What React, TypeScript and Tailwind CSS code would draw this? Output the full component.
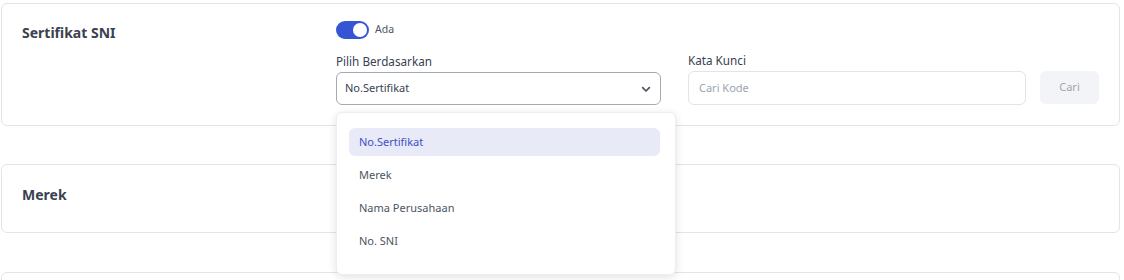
import React from "react";

export default function App() {
  const items = ["No.Sertifikat", "Merek", "Nama Perusahaan", "No. SNI"];
  return (
    <div className="w-[1124px] h-[280px] overflow-hidden bg-white pt-[3px] pl-[1px] font-['Noto_Sans','Open_Sans',sans-serif]">
      <div className="w-[1119px] h-[123px] border border-[#e2e4e8] rounded-[6px] flex pl-[20px] pt-[17px]">
        <div className="w-[314px] pt-[2px] text-[14px] leading-[20px] font-bold text-[#3a4150]">Sertifikat SNI</div>
        <div className="flex flex-col">
          <div className="flex items-center gap-[6px] h-[18px]">
            <div className="w-[33px] h-[18px] rounded-full bg-[#3556d4] flex items-center justify-end pr-[2px]">
              <div className="w-[14px] h-[14px] rounded-full bg-white" />
            </div>
            <span className="text-[10.5px] text-[#4b5563]">Ada</span>
          </div>
          <div className="flex items-end mt-[13px]">
            <div className="flex flex-col">
              <div className="text-[11.7px] leading-[16px] text-[#374151] mb-[3px]">Pilih Berdasarkan</div>
              <div className="relative w-[325px] h-[33px] border border-[#a5a9b3] rounded-[6px] flex items-center pl-[8px] pr-[6px] justify-between">
                <span className="text-[11px] text-[#374151]">No.Sertifikat</span>
                <svg width="16" height="16" viewBox="0 0 24 24" fill="none" stroke="#4b5563" strokeWidth="2.6" strokeLinecap="round" strokeLinejoin="round"><path d="M7 10l5 5 5-5" /></svg>
                <div className="absolute left-[-1px] top-[39px] w-[340px] h-[163px] bg-white rounded-[6px] border border-[#eceef1] shadow-[0_2px_8px_rgba(0,0,0,0.12)] pt-[15px] pl-[12px] pr-[15px] z-10 flex flex-col gap-[5px]">
                  {items.map((it, i) => (
                    <div key={it} className={i === 0 ? "h-[28px] rounded-[6px] flex items-center pl-[10px] text-[11px] bg-[#e8eaf7] text-[#3b50c9]" : "h-[28px] rounded-[6px] flex items-center pl-[10px] text-[11px] text-[#4b5563]"}>{it}</div>
                  ))}
                </div>
              </div>
            </div>
            <div className="flex flex-col ml-[27px]">
              <div className="text-[11.7px] leading-[16px] text-[#374151] mb-[3px]">Kata Kunci</div>
              <div className="w-[338px] h-[34px] border border-[#e2e4e8] rounded-[6px] flex items-center pl-[10px]">
                <span className="text-[11px] text-[#9ca3af]">Cari Kode</span>
              </div>
            </div>
            <div className="ml-[14px] mb-[1px] w-[59px] h-[33px] rounded-[6px] bg-[#f3f4f7] flex items-center justify-center text-[11px] text-[#a0a5ae]">Cari</div>
          </div>
        </div>
      </div>
      <div className="mt-[38px] w-[1119px] h-[69px] border border-[#e2e4e8] rounded-[6px] flex items-center pl-[20px]">
        <div className="text-[14px] font-bold text-[#3a4150] -mt-[8px]">Merek</div>
      </div>
      <div className="mt-[39px] w-[1119px] h-[60px] border border-[#e2e4e8] rounded-[6px]" />
    </div>
  );
}
